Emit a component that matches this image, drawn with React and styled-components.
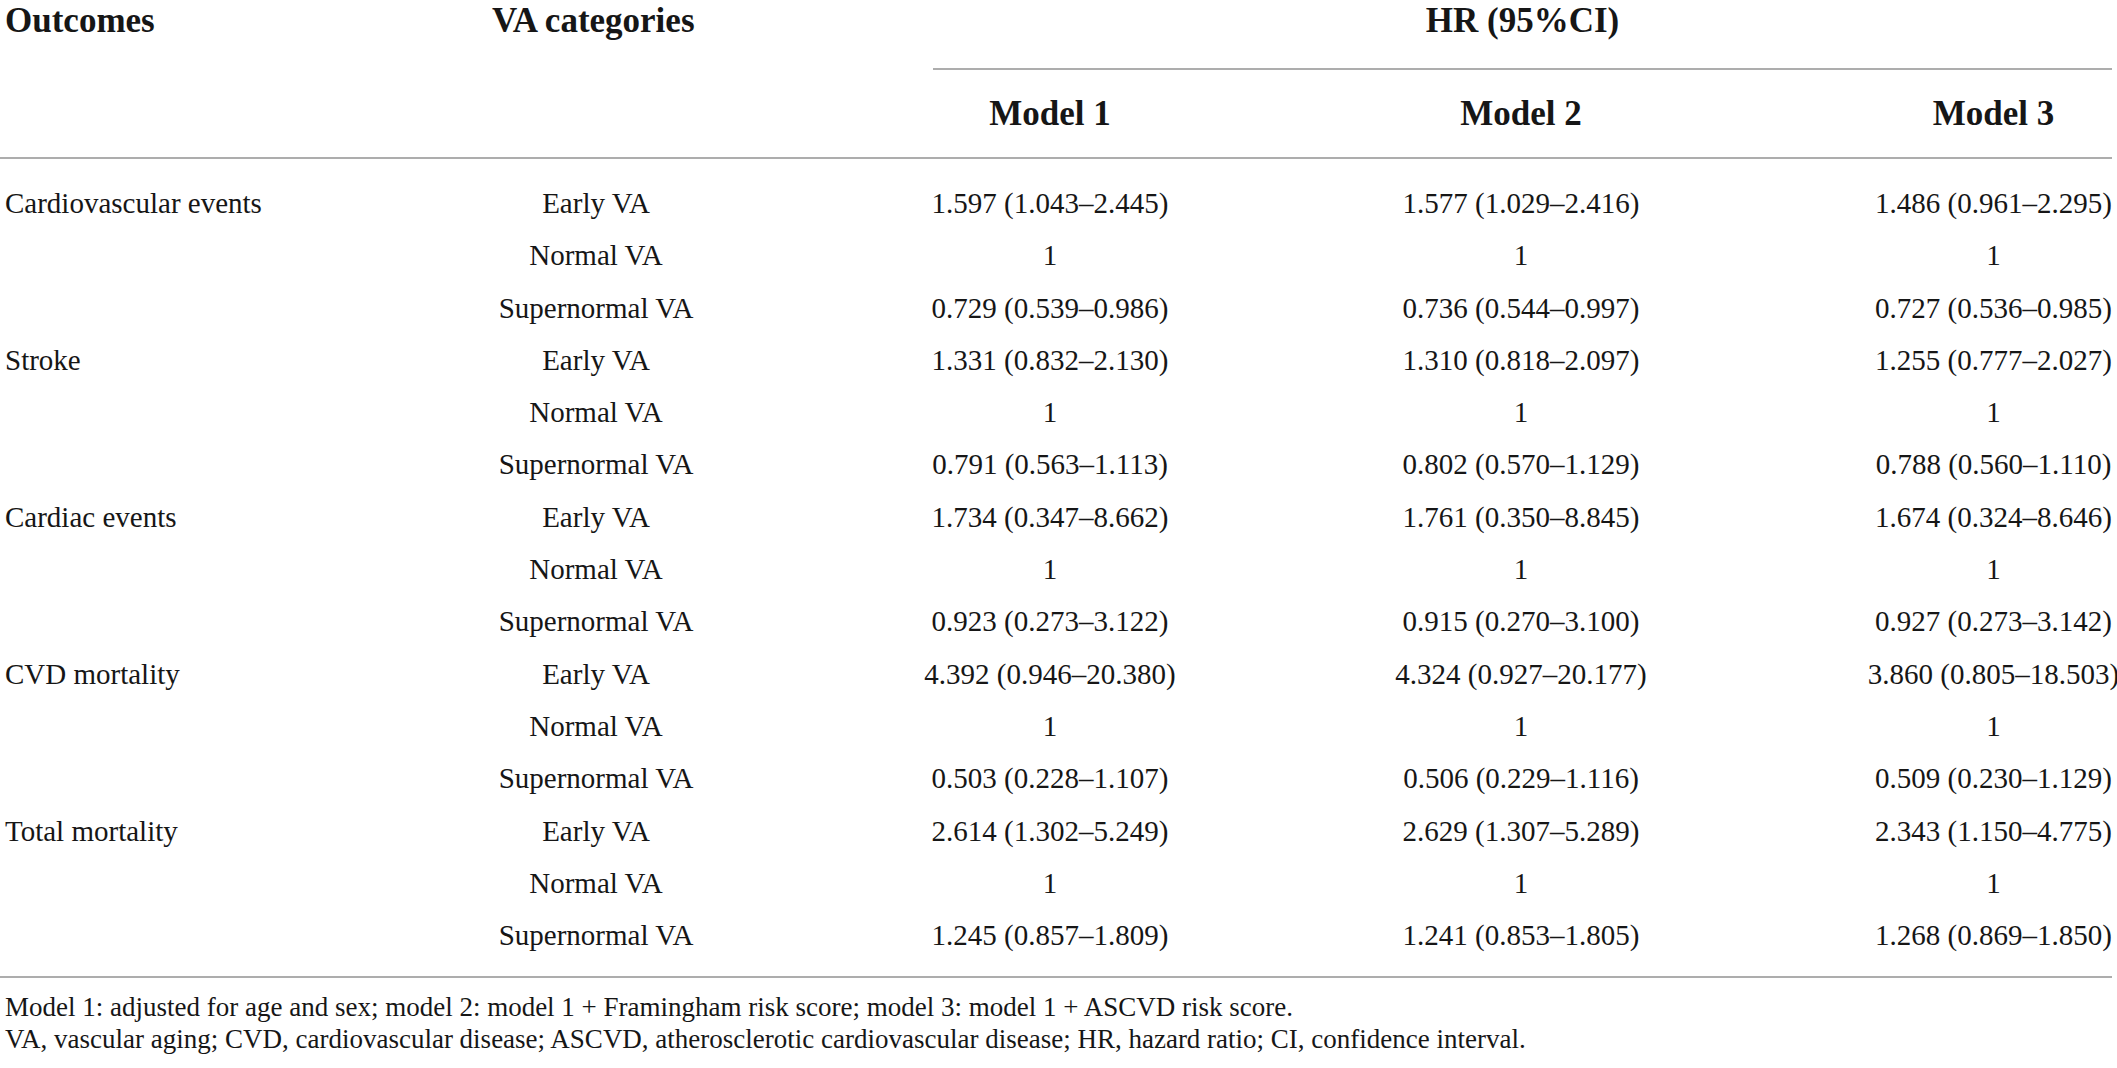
import React from 'react';
import styled, { createGlobalStyle } from 'styled-components';

const GlobalStyle = createGlobalStyle`
  html, body {
    margin: 0;
    padding: 0;
    background: #ffffff;
    overflow: hidden;
  }
  body {
    font-family: "Liberation Serif", "Times New Roman", serif;
    color: #161616;
  }
`;

const COLUMNS = '492px 441px 234px 708px 237px';
const RULE = '2px solid #adadad';

const Table = styled.div`
  width: 2112px;
`;

const Head = styled.div`
  display: grid;
  grid-template-columns: ${COLUMNS};
  grid-template-rows: auto auto;
  border-bottom: ${RULE};
`;

const HeadCell = styled.div`
  font-weight: 700;
  font-size: 35px;
  line-height: 40px;
  padding-top: 1px;
  padding-left: ${p => p.$inset || 0}px;
  grid-row: span 2;
  white-space: nowrap;
`;

const GroupHead = styled.div`
  grid-column: 3 / span 3;
  text-align: center;
  font-weight: 700;
  font-size: 35px;
  line-height: 40px;
  padding: 1px 0 27px;
  border-bottom: ${RULE};
`;

const ModelHead = styled.div`
  text-align: center;
  font-weight: 700;
  font-size: 35px;
  line-height: 40px;
  padding: 24px 0 23px;
`;

const Body = styled.div`
  padding: 18px 0 15px;
  border-bottom: ${RULE};
`;

const Row = styled.div`
  display: grid;
  grid-template-columns: ${COLUMNS};
  font-size: 29px;
  line-height: 52.3px;
`;

const OutcomeCell = styled.div`
  padding-left: 5px;
  white-space: nowrap;
`;

const CategoryCell = styled.div`
  width: 208px;
  text-align: center;
  white-space: nowrap;
`;

const ValueCell = styled.div`
  display: flex;
  justify-content: center;
  white-space: nowrap;
`;

const Notes = styled.div`
  padding-top: 13px;
  padding-left: 5px;
  font-size: 27px;
  line-height: 32px;
`;

const data = [
  {
    outcome: 'Cardiovascular events',
    values: [
      ['1.597 (1.043–2.445)', '1.577 (1.029–2.416)', '1.486 (0.961–2.295)'],
      ['1', '1', '1'],
      ['0.729 (0.539–0.986)', '0.736 (0.544–0.997)', '0.727 (0.536–0.985)'],
    ],
  },
  {
    outcome: 'Stroke',
    values: [
      ['1.331 (0.832–2.130)', '1.310 (0.818–2.097)', '1.255 (0.777–2.027)'],
      ['1', '1', '1'],
      ['0.791 (0.563–1.113)', '0.802 (0.570–1.129)', '0.788 (0.560–1.110)'],
    ],
  },
  {
    outcome: 'Cardiac events',
    values: [
      ['1.734 (0.347–8.662)', '1.761 (0.350–8.845)', '1.674 (0.324–8.646)'],
      ['1', '1', '1'],
      ['0.923 (0.273–3.122)', '0.915 (0.270–3.100)', '0.927 (0.273–3.142)'],
    ],
  },
  {
    outcome: 'CVD mortality',
    values: [
      ['4.392 (0.946–20.380)', '4.324 (0.927–20.177)', '3.860 (0.805–18.503)'],
      ['1', '1', '1'],
      ['0.503 (0.228–1.107)', '0.506 (0.229–1.116)', '0.509 (0.230–1.129)'],
    ],
  },
  {
    outcome: 'Total mortality',
    values: [
      ['2.614 (1.302–5.249)', '2.629 (1.307–5.289)', '2.343 (1.150–4.775)'],
      ['1', '1', '1'],
      ['1.245 (0.857–1.809)', '1.241 (0.853–1.805)', '1.268 (0.869–1.850)'],
    ],
  },
];

const categories = ['Early VA', 'Normal VA', 'Supernormal VA'];

export default function App() {
  return (
    <>
      <GlobalStyle />
      <Table>
        <Head>
          <HeadCell $inset={5}>Outcomes</HeadCell>
          <HeadCell>VA categories</HeadCell>
          <GroupHead>HR (95%CI)</GroupHead>
          <ModelHead>Model 1</ModelHead>
          <ModelHead>Model 2</ModelHead>
          <ModelHead>Model 3</ModelHead>
        </Head>

        <Body>
          {data.map(group =>
            group.values.map((vals, i) => (
              <Row key={group.outcome + i}>
                <OutcomeCell>{i === 0 ? group.outcome : ''}</OutcomeCell>
                <CategoryCell>{categories[i]}</CategoryCell>
                {vals.map((v, j) => (
                  <ValueCell key={j}>{v}</ValueCell>
                ))}
              </Row>
            ))
          )}
        </Body>

        <Notes>
          <div>Model 1: adjusted for age and sex; model 2: model 1 + Framingham risk score; model 3: model 1 + ASCVD risk score.</div>
          <div>VA, vascular aging; CVD, cardiovascular disease; ASCVD, atherosclerotic cardiovascular disease; HR, hazard ratio; CI, confidence interval.</div>
        </Notes>
      </Table>
    </>
  );
}
